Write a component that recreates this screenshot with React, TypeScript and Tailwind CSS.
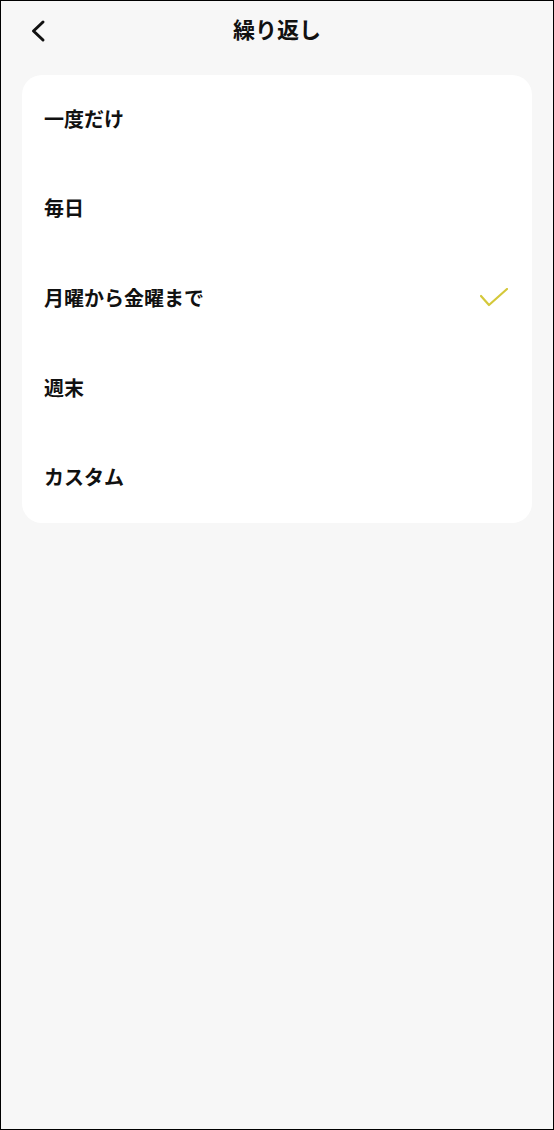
const ITEMS = ["一度だけ", "毎日", "月曜から金曜まで", "週末", "カスタム"];
const SELECTED = 2;

function BackIcon() {
  return (
    <svg width="16" height="24" viewBox="0 0 16 24" fill="none">
      <path
        d="M13 3 L3.5 12 L13 21"
        stroke="#111111"
        strokeWidth="3"
        strokeLinecap="round"
        strokeLinejoin="round"
      />
    </svg>
  );
}

function CheckIcon() {
  return (
    <svg width="28" height="19" viewBox="0 0 28 19" fill="none">
      <path
        d="M1 8 L9 17 L27 1"
        stroke="#d4c83a"
        strokeWidth="2.2"
        strokeLinecap="round"
        strokeLinejoin="round"
      />
    </svg>
  );
}

export default function App() {
  return (
    <div
      className="box-border h-[1130px] w-[554px] border border-black bg-[#f7f7f7] text-[#111111]"
      style={{ fontFamily: '"Noto Sans CJK JP", "Noto Sans", sans-serif' }}
    >
      {/* header */}
      <div className="relative flex h-[53px] items-center justify-center">
        <div className="absolute left-[29px] top-[18px]">
          <BackIcon />
        </div>
        <h1 className="text-[22px] font-bold leading-none">繰り返し</h1>
      </div>

      {/* options card */}
      <div className="mt-[21px] px-[21px]">
        <div className="overflow-hidden rounded-[20px] bg-white">
          {ITEMS.map((label, i) => (
            <div
              key={label}
              className="flex h-[89.6px] items-center justify-between pb-[2px] pl-[22px] pr-[24px]"
            >
              <span className="text-[20px] font-bold leading-none">{label}</span>
              {i === SELECTED && <CheckIcon />}
            </div>
          ))}
        </div>
      </div>
    </div>
  );
}
